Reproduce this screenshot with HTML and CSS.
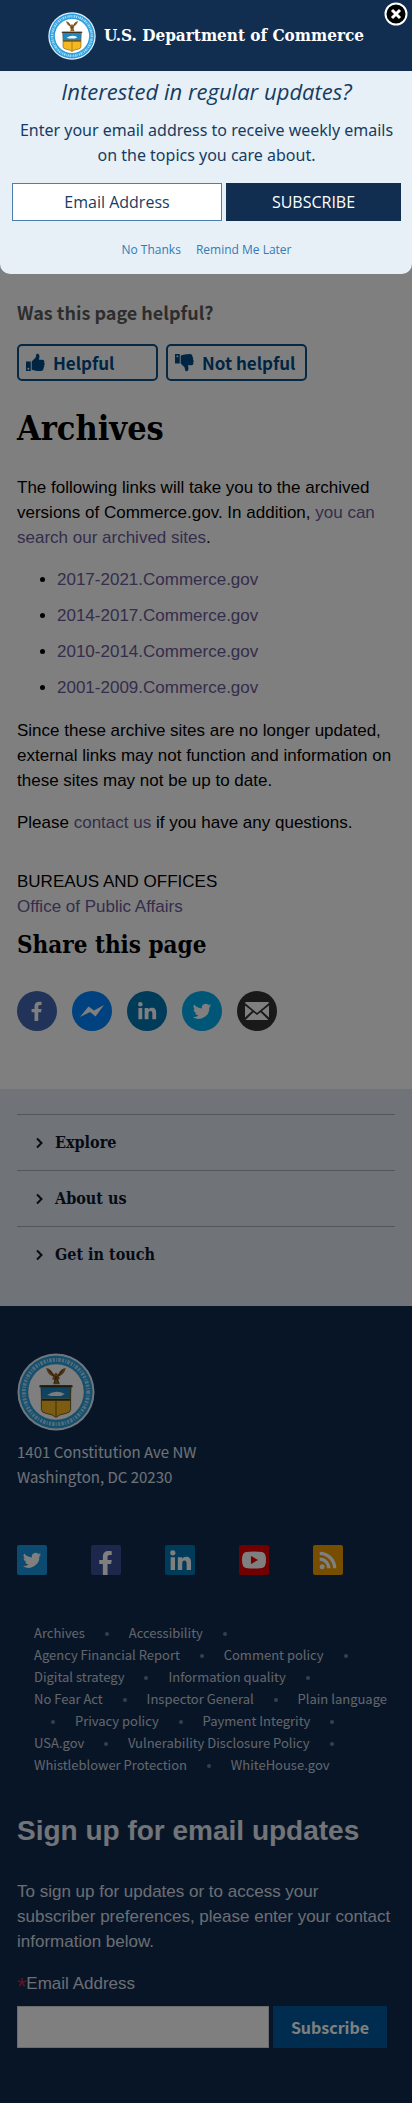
FILE: index.html
```html
<!DOCTYPE html>
<html lang="en">
<head>
<meta charset="utf-8">
<meta name="viewport" content="width=device-width, initial-scale=1">
<title>Archives | U.S. Department of Commerce</title>
<link rel="stylesheet" href="styles.css">
</head>
<body>
<svg class="defs" aria-hidden="true">
  <symbol id="seal" viewBox="0 0 80 80">
    <circle cx="40" cy="40" r="39.500" fill="#dff1fb"/>
    <circle cx="40" cy="40" r="37.500" fill="#2f9fdd"/>
    <circle cx="40" cy="40" r="33" fill="none" stroke="#a5dcf5" stroke-width="4" stroke-dasharray="2 1.500 1 1.200 2.500 1.300"/>
    <circle cx="40" cy="40" r="28.500" fill="#fff"/>
    <path d="M30 15c1 6 4 8 7 9l-1 3 3 1-2 4h7l-2-4 2-2-1-2c4-2 6-4 7-9-4 1-6 3-8 7l-2-2-2 2c-2-3-4-6-8-7z" fill="#9b6b28"/>
    <path d="M33 17l5 7M47 17l-5 7M38 31l2-7 3 7" stroke="#4c3517" fill="none"/>
    <path d="M24 33h32l-1 14H25z" fill="#2186be"/>
    <path d="M25 47h30v11q0 3-5 4-7 1-10 4-3-3-10-4-5-1-5-4z" fill="#f6b821"/>
    <path d="M23 34h34M25 48h30" stroke="#3a3420" stroke-width="2"/>
    <path d="M40 48v17" stroke="#7d6018"/>
    <path d="M31 43q9-6 18-1l-4 2H35z" fill="#f2f7fa"/>
    <path d="M25 34v24q0 3 5 4 7 1 10 4 3-3 10-4 5-1 5-4V34" fill="none" stroke="#735724"/>
  </symbol>
  <symbol id="bird" viewBox="0 0 24 24"><path d="M23 5.500a8 8 0 0 1-2.500.7 4.500 4.500 0 0 0 2-2.500 9 9 0 0 1-2.900 1.100 4.500 4.500 0 0 0-7.700 4.100A12.800 12.800 0 0 1 2.600 4.200a4.500 4.500 0 0 0 1.400 6 4.500 4.500 0 0 1-2-.6 4.500 4.500 0 0 0 3.600 4.500 4.500 4.500 0 0 1-2 .1 4.500 4.500 0 0 0 4.200 3.100A9 9 0 0 1 1 19.200 12.800 12.800 0 0 0 20.800 7.800 9 9 0 0 0 23 5.500z"/></symbol>
  <symbol id="fb" viewBox="0 0 24 24"><path d="M9 24V13.500H5.500v-4H9V6.600C9 2.900 11 1 14.500 1c1.600 0 3 .2 3 .2v3.700h-1.900c-1.700 0-2.100.9-2.100 2v2.600h4l-.6 4h-3.400V24z"/></symbol>
  <symbol id="linkedin" viewBox="0 0 24 24"><circle cx="4" cy="4" r="2.700"/><path d="M1.700 8.500h4.600V22H1.700zM9.200 8.500h4.400v1.900c.8-1.400 2.400-2.200 4.300-2.200 4 0 5.100 2.500 5.100 6.300V22h-4.600v-6.800c0-1.700-.3-3.200-2.200-3.200s-2.400 1.500-2.400 3.200V22H9.200z"/></symbol>
  <symbol id="thumb" viewBox="0 0 20 20"><path d="M0 9h5v10H0zM6 9l4-4 1-4c3-1 4 2 2.500 6H17c2 0 3 1.500 2 3 1 1 .8 2 0 3 .5 1 .2 2-.6 2.700.2 1.300-.4 3.300-3 3.300C11 19 9 18 6 17.500z"/><circle cx="2.500" cy="16.500" r="1" fill="#fff"/></symbol>
  <symbol id="chev" viewBox="0 0 8 12"><path d="M1.500 1.500L6 6l-4.500 4.500" fill="none" stroke="#0a1626" stroke-width="2"/></symbol>
</svg>

<div class="page">
  <main class="main">
    <section class="feedback">
      <h2 class="feedback-title">Was this page helpful?</h2>
      <div class="feedback-buttons">
        <button class="vote" type="button"><svg class="vote-icon"><use href="#thumb"/></svg>Helpful</button>
        <button class="vote" type="button"><svg class="vote-icon vote-icon-down"><use href="#thumb"/></svg>Not helpful</button>
      </div>
    </section>
    <h1 class="title">Archives</h1>
    <p class="text">The following links will take you to the archived versions of Commerce.gov. In addition, <a href="#search">you can search our archived sites</a>.</p>
    <ul class="archive-list">
      <li><a href="#a2017">2017-2021.Commerce.gov</a></li>
      <li><a href="#a2014">2014-2017.Commerce.gov</a></li>
      <li><a href="#a2010">2010-2014.Commerce.gov</a></li>
      <li><a href="#a2001">2001-2009.Commerce.gov</a></li>
    </ul>
    <p class="text">Since these archive sites are no longer updated, external links may not function and information on these sites may not be up to date.</p>
    <p class="text">Please <a href="#contact">contact us</a> if you have any questions.</p>
    <div class="bureaus">
      <div>BUREAUS AND OFFICES</div>
      <div><a href="#opa">Office of Public Affairs</a></div>
    </div>
    <h2 class="share-title">Share this page</h2>
    <div class="share">
      <a class="share-link share-fb" href="#fb" aria-label="Facebook"><svg class="glyph-md"><use href="#fb"/></svg></a>
      <a class="share-link share-msg" href="#msg" aria-label="Messenger"><svg class="glyph-lg" viewBox="0 0 26 26"><path d="M1 19L9.500 8.500l5.500 4L25 7 16.500 18.500 11 14z"/></svg></a>
      <a class="share-link share-in" href="#in" aria-label="LinkedIn"><svg class="glyph-md"><use href="#linkedin"/></svg></a>
      <a class="share-link share-tw" href="#tw" aria-label="Twitter"><svg class="glyph-md"><use href="#bird"/></svg></a>
      <a class="share-link share-mail" href="#mail" aria-label="Email"><svg class="glyph-lg" viewBox="0 0 26 26"><path d="M2 4h22q1 0 1 1L13 15 1 5q0-1 1-1zM1 7.500L8 13l-7 6.500zM25 7.500L18 13l7 6.500zM9.500 14.200L13 17l3.500-2.800L24.500 22H1.500z"/></svg></a>
    </div>
  </main>

  <nav class="sections" aria-label="Sections">
    <button class="section-toggle" type="button"><svg class="chev"><use href="#chev"/></svg>Explore</button>
    <button class="section-toggle" type="button"><svg class="chev"><use href="#chev"/></svg>About us</button>
    <button class="section-toggle" type="button"><svg class="chev"><use href="#chev"/></svg>Get in touch</button>
  </nav>

  <footer class="footer">
    <svg class="footer-seal" role="img" aria-label="Department of Commerce seal"><use href="#seal"/></svg>
    <address class="address">1401 Constitution Ave NW<br>Washington, DC 20230</address>
    <div class="social">
      <a class="social-link social-tw" href="#tw2" aria-label="Twitter"><svg class="glyph-md"><use href="#bird"/></svg></a>
      <a class="social-link social-fb" href="#fb2" aria-label="Facebook"><svg class="glyph-fb"><use href="#fb"/></svg></a>
      <a class="social-link social-in" href="#in2" aria-label="LinkedIn"><svg class="glyph-in"><use href="#linkedin"/></svg></a>
      <a class="social-link social-yt" href="#yt" aria-label="YouTube"><svg class="glyph-lg" viewBox="0 0 26 26"><path fill-rule="evenodd" d="M5 5q8-1 16 0 4 .5 4 8t-4 8q-8 1-16 0-4-.5-4-8t4-8zm5 4v8l7-4z"/></svg></a>
      <a class="social-link social-rss" href="#rss" aria-label="RSS"><svg class="glyph-md" viewBox="0 0 24 24"><circle cx="5" cy="20" r="3"/><path d="M2 11a11 11 0 0 1 11 11M2 4a18 18 0 0 1 18 18" fill="none" stroke="#fff" stroke-width="4"/></svg></a>
    </div>
    <ul class="links">
      <li><a href="#l1">Archives</a> </li>
      <li><a href="#l2">Accessibility</a> </li>
      <li><a href="#l3">Agency Financial Report</a> </li>
      <li><a href="#l4">Comment policy</a> </li>
      <li><a href="#l5">Digital strategy</a> </li>
      <li><a href="#l6">Information quality</a> </li>
      <li><a href="#l7">No Fear Act</a> </li>
      <li><a href="#l8">Inspector General</a> </li>
      <li><a href="#l9">Plain language</a> </li>
      <li><a href="#l10">Privacy policy</a> </li>
      <li><a href="#l11">Payment Integrity</a> </li>
      <li><a href="#l12">USA.gov</a> </li>
      <li><a href="#l13">Vulnerability Disclosure Policy</a> </li>
      <li><a href="#l14">Whistleblower Protection</a> </li>
      <li><a href="#l15">WhiteHouse.gov</a></li>
    </ul>
    <h2 class="signup-title">Sign up for email updates</h2>
    <p class="signup-text">To sign up for updates or to access your subscriber preferences, please enter your contact information below.</p>
    <form class="signup">
      <label class="signup-label" for="signup-email"><span class="required">*</span>Email Address</label>
      <div class="signup-row">
        <input class="signup-input" id="signup-email" type="email">
        <button class="signup-button" type="button">Subscribe</button>
      </div>
    </form>
  </footer>
</div>

<div class="overlay"></div>
<section class="popup" role="dialog" aria-label="Email updates">
  <header class="popup-brand">
    <svg class="popup-seal" role="img" aria-label="Department of Commerce seal"><use href="#seal"/></svg>
    <span>U.S. Department of Commerce</span>
  </header>
  <div class="popup-body">
    <h2 class="popup-title">Interested in regular updates?</h2>
    <p class="popup-text">Enter your email address to receive weekly emails on the topics you care about.</p>
    <form class="popup-form">
      <input class="popup-input" type="email" placeholder="Email Address" aria-label="Email Address">
      <button class="popup-submit" type="button">SUBSCRIBE</button>
    </form>
    <div class="popup-links"><a href="#no">No Thanks</a><a href="#later">Remind Me Later</a></div>
  </div>
  <button class="popup-close" type="button" aria-label="Close"><svg class="close-icon" viewBox="0 0 24 24"><circle cx="12" cy="12" r="10.500" fill="#000" stroke="#fff" stroke-width="2"/><path d="M8 8l8 8M16 8l-8 8" stroke="#fff" stroke-width="3"/></svg></button>
</section>
</body>
</html>
```

FILE: styles.css
```css
* { box-sizing: border-box; }
body {
  margin: 0;
  position: relative;
  color: #000;
  font: 17px/25px "Liberation Sans", Arial, sans-serif;
}
a { color: #6a5a98; text-decoration: none; }
button, input { font: inherit; margin: 0; }
svg { display: block; flex: none; }
.defs { position: absolute; width: 0; height: 0; }

.page { display: flex; flex-direction: column; min-height: 100vh; background: #fff; }
.main { padding: 299px 17px 58px; }

.feedback-title {
  margin: 0 0 19px;
  color: #5b5b5b;
  font: bold 18px/26px "Noto Sans CJK SC", "Open Sans", sans-serif;
}
.feedback-buttons { display: flex; gap: 8px; }
.vote {
  display: flex;
  align-items: center;
  gap: 8px;
  width: 141px;
  height: 37px;
  padding: 0 7px;
  border: 2px solid #0b5288;
  border-radius: 5px;
  background: transparent;
  color: #004b87;
  font: bold 17px/24px "Noto Sans CJK SC", "Open Sans", sans-serif;
  white-space: nowrap;
}
.vote-icon { width: 19px; height: 19px; fill: #004b87; }
.vote-icon-down { transform: scaleY(-1); }

.title, .share-title, .section-toggle, .popup-brand {
  font-family: "DejaVu Serif Condensed", "DejaVu Serif", serif;
  font-weight: bold;
}
.title { margin: 24px 0; font-size: 34px; line-height: 46px; }
.text { margin: 0 0 17px; }
.archive-list { margin: 0 0 17px; padding-left: 40px; }
.archive-list li { margin-bottom: 10px; line-height: 26px; }
.bureaus { margin-top: 34px; }
.share-title { margin: 9px 0 29px; font-size: 24px; line-height: 34px; }
.share { display: flex; gap: 15px; }
.share-link { display: grid; place-items: center; width: 40px; height: 40px; border-radius: 50%; fill: #fff; }
.glyph-md { width: 20px; height: 20px; }
.glyph-lg { width: 26px; height: 26px; }
.glyph-in { width: 23px; height: 23px; }
.glyph-fb { width: 26px; height: 25px; }
.share-fb { background: #4267b2; }
.share-msg { background: #0084ff; }
.share-in { background: #0077b5; }
.share-tw { background: #00aced; }
.share-mail { background: #333; }

.sections { display: flex; flex-direction: column; padding: 25px 17px 24px; background: #e1e7f1; }
.section-toggle {
  display: flex;
  align-items: center;
  gap: 11px;
  height: 56px;
  padding: 0 18px;
  border: 0;
  border-top: 1px solid #a6acb6;
  background: transparent;
  color: #0a1626;
  font-size: 16px;
  text-align: left;
}
.chev { width: 9px; height: 12px; }

.footer { flex: 1; padding: 47px 17px 48px; background: #112b4e; color: #fff; }
.footer-seal { width: 78px; height: 78px; }
.address { margin-top: 8px; font: 15px/25px "Noto Sans CJK SC", "Open Sans", sans-serif; color: #dce4ef; }
.social { display: flex; gap: 44px; margin-top: 56px; }
.social-link { display: grid; place-items: center; width: 30px; height: 30px; overflow: hidden; border-radius: 2px; fill: #fff; }
.social-link.social-fb { align-items: end; }
.social-tw { background: #1b95e0; }
.social-fb { background: #3b4f96; }
.social-in { background: #0077b5; }
.social-yt { background: #e60000; }
.social-rss { background: #ee9b00; }
.links {
  margin: 47px 0 0;
  padding: 0 5px 0 17px;
  list-style: none;
  font: 13px/22px "Noto Sans CJK SC", "Open Sans", sans-serif;
}
.links li { display: inline; }
.links li:not(:last-child)::after {
  content: "";
  display: inline-block;
  width: 4px;
  height: 4px;
  margin: 0 17px;
  border-radius: 50%;
  background: #66809f;
  vertical-align: middle;
}
.links a { color: #c4ccd8; white-space: nowrap; }
.signup-title { margin: 37px 0 30px; color: #e3e8f0; font-size: 28px; line-height: 36px; }
.signup-text { margin: 0 0 17px; color: #d6dce5; }
.signup-label { display: block; color: #d6dce5; }
.required { color: #c8203c; font-size: 24px; line-height: 16px; vertical-align: -6px; }
.signup-row { display: flex; gap: 4px; margin: 10px 8px 0 0; }
.signup-input { flex: 1; min-width: 0; height: 42px; border: 1px solid #d6d7d9; background: #fff; padding: 0 8px; }
.signup-button {
  width: 114px;
  height: 42px;
  border: 0;
  background: #005a9e;
  color: #fff;
  font: bold 16px/24px "Noto Sans CJK SC", "Open Sans", sans-serif;
}

.overlay { position: absolute; inset: 0; background: rgba(0, 0, 0, .5); }
.popup {
  position: absolute;
  top: 0;
  left: 0;
  right: 0;
  overflow: hidden;
  border-radius: 0 0 10px 10px;
  background: #e7f0f6;
  color: #163c63;
  font-family: "Open Sans", "Noto Sans", sans-serif;
  text-align: center;
}
.popup-brand {
  display: flex;
  align-items: center;
  justify-content: center;
  gap: 8px;
  height: 71px;
  background: #112e51;
  color: #fff;
  font-size: 17px;
  white-space: nowrap;
}
.popup-seal { width: 48px; height: 48px; }
.popup-body { padding: 6px 11px 12px 12px; }
.popup-title { margin: 0 0 12px; font-size: 22px; font-style: italic; font-weight: 400; line-height: 29px; }
.popup-text { margin: 0 0 15px; font: 16px/25px "Noto Sans", "Open Sans", sans-serif; }
.popup-form { display: grid; grid-template-columns: 6fr 5fr; gap: 4px; margin: 0 0 17px; }
.popup-input, .popup-submit { min-width: 0; height: 38px; padding: 0; font-size: 16px; text-align: center; }
.popup-input { border: 1px solid #4a7fb0; background: #fff; color: #163c63; }
.popup-input::placeholder { color: #163c63; opacity: 1; }
.popup-submit { border: 0; background: #112e51; color: #fff; }
.popup-links { display: flex; justify-content: center; gap: 15px; font-size: 12px; line-height: 24px; }
.popup-links a { color: #337ab7; }
.popup-close { position: absolute; top: 2px; right: 4px; padding: 0; border: 0; background: transparent; }
.close-icon { width: 24px; height: 24px; }
```
